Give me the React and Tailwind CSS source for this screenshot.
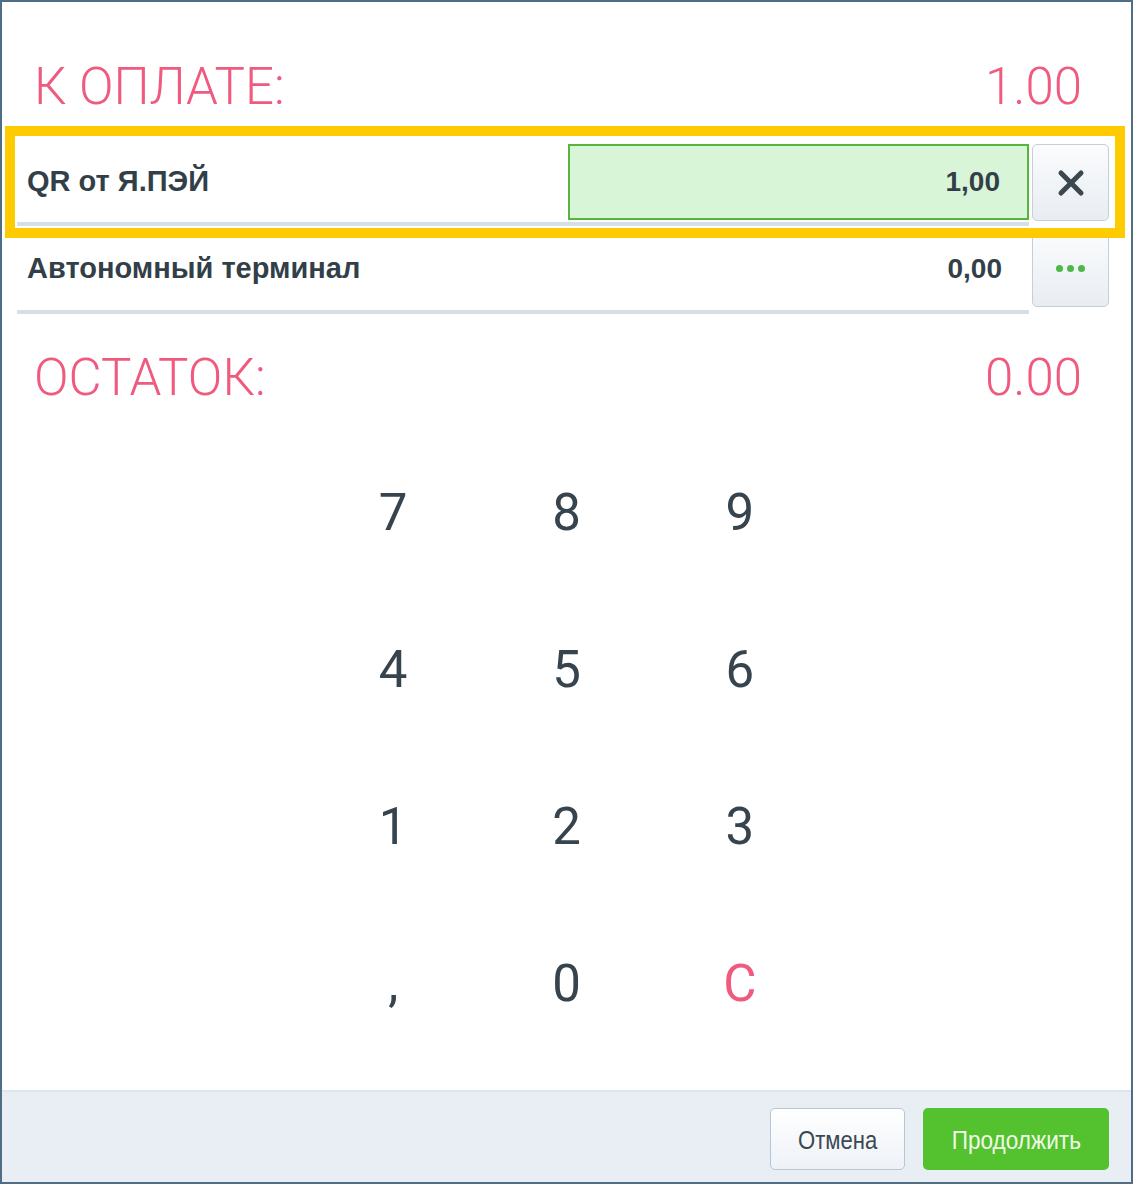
import { X } from 'lucide-react'

const PINK = 'text-[#ef5a7e]'

const keys = ['7', '8', '9', '4', '5', '6', '1', '2', '3', ',', '0', 'C']

function SideButton({ children }) {
  return (
    <button className="ml-[3px] mt-[4px] flex h-[77px] w-[77px] shrink-0 items-center justify-center rounded-[5px] border border-[#c3cfd9] bg-gradient-to-b from-[#fbfcfd] to-[#e8edf2]">
      {children}
    </button>
  )
}

function Dots() {
  return (
    <div className="flex gap-[4px]">
      <span className="h-[7px] w-[7px] rounded-full bg-[#4db848]" />
      <span className="h-[7px] w-[7px] rounded-full bg-[#4db848]" />
      <span className="h-[7px] w-[7px] rounded-full bg-[#4db848]" />
    </div>
  )
}

function Total({ label, value, className }) {
  return (
    <div className={`flex items-start justify-between pl-[32px] pr-[49px] font-['Roboto',sans-serif] text-[51px] font-light leading-none ${PINK} ${className}`}>
      <span>{label}</span>
      <span>{value}</span>
    </div>
  )
}

export default function App() {
  return (
    <div className="relative flex h-[1184px] w-[1133px] flex-col border-2 border-[#4f6e86] bg-white font-['Liberation_Sans',Arial,sans-serif] text-[#333f48]">
      <div className="flex-1">
        <Total label="К ОПЛАТЕ:" value="1.00" className="pt-[59px]" />

        <div className="mt-[28px] pl-[15px]">
          {/* оплата QR */}
          <div className="flex">
            <div className="flex w-[1012px] items-center border-b-4 border-[#d6dee6] pb-[2px] pt-[4px]">
              <span className="flex-1 pl-[10px] text-[29px] font-bold">QR от Я.ПЭЙ</span>
              <div className="flex h-[76px] w-[461px] items-center justify-end border-2 border-[#58b43a] bg-[#d9f5d8] pr-[27px] text-[28px] font-bold">
                1,00
              </div>
            </div>
            <SideButton>
              <X className="h-[40px] w-[40px] text-[#3c4850]" strokeWidth={3} />
            </SideButton>
          </div>

          {/* автономный терминал */}
          <div className="flex">
            <div className="flex h-[88px] w-[1012px] items-center justify-between border-b-4 border-[#d6dee6] pl-[10px] pr-[27px] pt-[2px]">
              <span className="text-[29px] font-bold">Автономный терминал</span>
              <span className="text-[28px] font-bold">0,00</span>
            </div>
            <SideButton>
              <Dots />
            </SideButton>
          </div>
        </div>

        <Total label="ОСТАТОК:" value="0.00" className="pt-[38px]" />

        <div className="mx-auto mt-[31px] grid w-[520px] grid-cols-3">
          {keys.map(k => (
            <div
              key={k}
              className={`flex h-[157px] items-center justify-center font-['Roboto',sans-serif] text-[51px] leading-none ${
                k === 'C' ? PINK : 'text-[#37444e]'
              }`}
            >
              {k}
            </div>
          ))}
        </div>
      </div>

      <div className="flex h-[92px] items-start justify-end gap-[18px] border-t-2 border-[#dfe5ec] bg-[#e9eef5] pr-[22px] pt-[16px]">
        <button className="h-[62px] w-[135px] rounded-[5px] border border-[#b5c6d5] bg-gradient-to-b from-white to-[#eef2f7] pt-[3px] text-[26px] text-[#3b4852]">
          <span className="inline-block scale-x-[0.85]">Отмена</span>
        </button>
        <button className="h-[62px] w-[186px] rounded-[5px] bg-[#54c12e] pt-[3px] text-[26px] text-[#eef9e8]">
          <span className="inline-block scale-x-[0.87]">Продолжить</span>
        </button>
      </div>

      {/* выделение строки */}
      <div className="pointer-events-none absolute left-[3px] top-[124px] h-[112px] w-[1120px] border-[10px] border-[#fecb00]" />
    </div>
  )
}
